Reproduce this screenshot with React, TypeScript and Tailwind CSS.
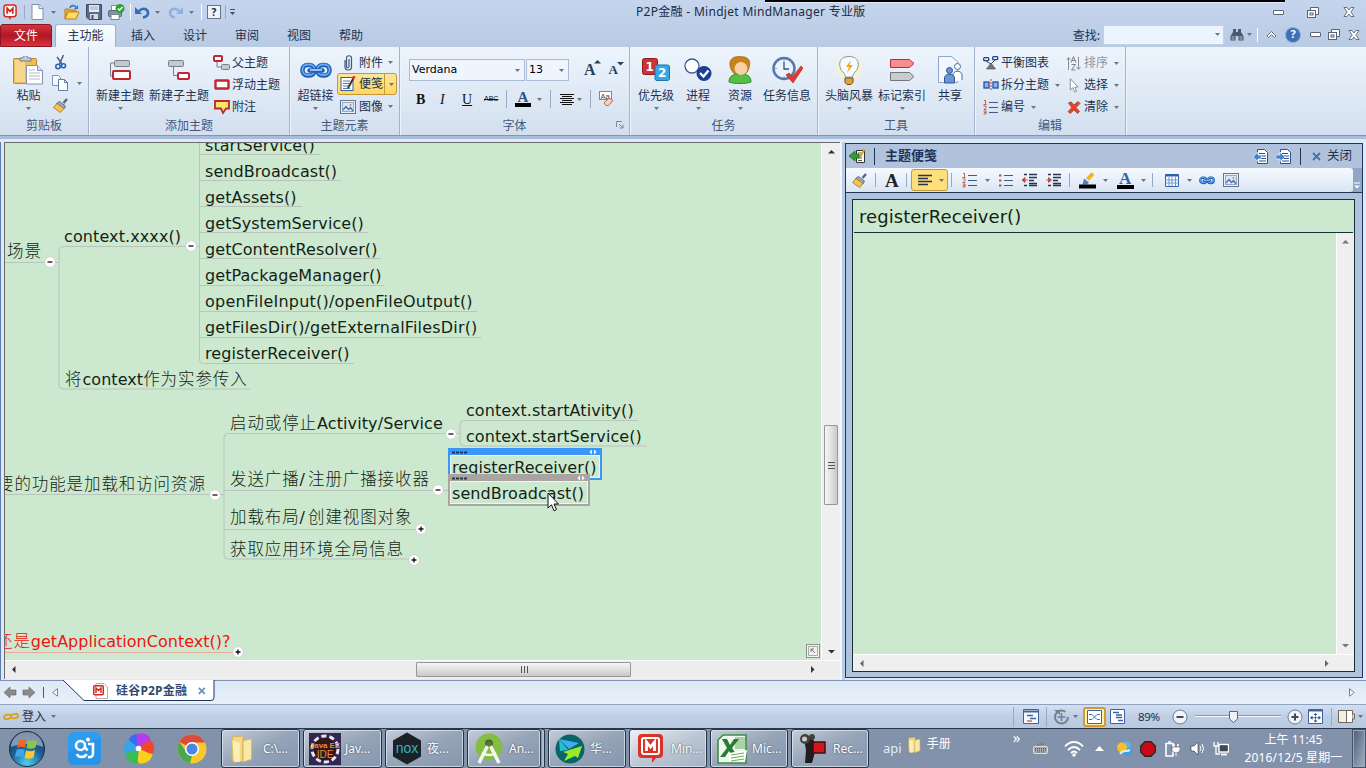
import React from "react";

type Kids = { children?: React.ReactNode };

function Ico({ w, h, children, className = "" }: Kids & { w: number; h: number; className?: string }) {
  return (
    <svg width={w} height={h} viewBox={`0 0 ${w} ${h}`} className={`block shrink-0 ${className}`} fill="none">
      {children}
    </svg>
  );
}

function Caret({ className = "" }: { className?: string }) {
  return (
    <Ico w={5} h={3} className={className}>
      <path d="M0 0h5L2.500 3z" fill="#6b7685" />
    </Ico>
  );
}

function Sep({ className = "" }: { className?: string }) {
  return <div className={`w-px shrink-0 bg-[#97a9c3] ${className}`} />;
}

/* ---------- icons ---------- */

const Mind = ({ s = 15 }: { s?: number }) => (
  <svg width={s} height={s + 2} viewBox="0 0 15 17" className="block shrink-0" fill="none">
    <rect x="1" y="1" width="13" height="12.500" rx="2.500" fill="#fff" stroke="#d5281f" strokeWidth="1.600" />
    <path d="M6 14h3l-1.500 3z" fill="#d5281f" />
    <path d="M4.500 10.500V4.500l3 3.400 3-3.400v6" stroke="#d5281f" strokeWidth="1.900" />
  </svg>
);
const Page = () => (
  <Ico w={13} h={16}>
    <path d="M1 .5h7l4 4v11H1z" fill="#fff" stroke="#7f90aa" />
    <path d="M8 .5v4h4" fill="#dfe7f3" stroke="#7f90aa" />
  </Ico>
);
const Open = () => (
  <Ico w={16} h={16}>
    <path d="M1 15V5h4l1 1h6v3" fill="#e3a92f" stroke="#b98316" />
    <path d="M1 15l3-7h11l-3 7z" fill="#ffd969" stroke="#b98316" />
    <path d="M6 4c1-3 4-3 6-1" stroke="#2f79c8" strokeWidth="1.600" />
    <path d="M10 5h4V1z" fill="#2f79c8" />
  </Ico>
);
const Save = () => (
  <Ico w={16} h={16}>
    <path d="M.5.500h15v15H3l-2.500-2.500z" fill="#5c6b85" stroke="#3d4b62" />
    <rect x="3" y="1" width="10" height="7" fill="#e4eaf2" />
    <path d="M4 3h8M4 5h8" stroke="#9aa8bb" />
    <rect x="4" y="10" width="8" height="5" fill="#d4dbe6" />
    <rect x="5.500" y="11" width="2" height="4" fill="#44536c" />
  </Ico>
);
const Print = () => (
  <Ico w={17} h={16}>
    <rect x="3.500" y="1.500" width="8" height="6" fill="#fff" stroke="#8090a6" />
    <rect x=".5" y="6.500" width="13" height="6" rx="1" fill="#8793a5" stroke="#5a6678" />
    <rect x="3" y="10.500" width="8" height="5" fill="#fff" stroke="#7b8797" />
    <circle cx="12" cy="4.500" r="4.500" fill="#28a336" />
    <path d="M9.800 4.500l1.700 1.700 3-3.300" stroke="#fff" strokeWidth="1.500" />
  </Ico>
);
const Undo = ({ c }: { c: string }) => (
  <Ico w={15} h={13}>
    <path d="M4 5c4-4 9-2 9 2 0 2.500-2 4-5 4.500" stroke={c} strokeWidth="2.600" />
    <path d="M0 1v7h7z" fill={c} />
  </Ico>
);
const Paste = () => (
  <Ico w={31} h={29}>
    <rect x=".5" y="2.500" width="23" height="25" rx="1" fill="#edbc5d" stroke="#b78a35" />
    <rect x="2" y="4" width="10" height="22" fill="#f7d58b" />
    <path d="M7 5V2h3c0-3 5-3 5 0h3v3z" fill="#c6cbd4" stroke="#79808c" />
    <path d="M13.500 9.500h11l5 5v13.500h-16z" fill="#fff" stroke="#8593aa" />
    <path d="M24.500 9.500v5h5" fill="#dce4f0" stroke="#8593aa" />
    <path d="M16 14h6M16 17h11M16 20h11M16 23h11" stroke="#aebbd0" />
  </Ico>
);
const Cut = () => (
  <Ico w={12} h={15}>
    <path d="M8.500 0L4 10M2 2l5 7" stroke="#4b5f86" strokeWidth="1.500" />
    <circle cx="3" cy="11.500" r="2.200" stroke="#2c62ad" strokeWidth="1.600" />
    <circle cx="8.500" cy="10.800" r="2" stroke="#2c62ad" strokeWidth="1.600" />
  </Ico>
);
const Copy = () => (
  <Ico w={17} h={16}>
    <path d="M.5.500h6l2 2v8h-8z" fill="#f7faff" stroke="#7d93b8" />
    <path d="M6.500 4.500h6l3 3v8h-9z" fill="#fff" stroke="#5d7db1" />
    <path d="M12.500 4.500v3h3" stroke="#5d7db1" />
  </Ico>
);
const Brush = () => (
  <Ico w={15} h={15}>
    <path d="M14 1l-3.500 4" stroke="#55657f" strokeWidth="2.400" />
    <path d="M6.500 3.500l6 4.500-1.500 3-7.500-5.500z" fill="#9aa7bd" stroke="#4c5c78" strokeWidth=".8" />
    <path d="M4 5.500l7 5-3.500 4L.5 9.500z" fill="#f3c550" stroke="#9a7423" strokeWidth=".8" />
  </Ico>
);
const NewTopic = () => (
  <Ico w={24} h={22}>
    <path d="M6 4H2.500v13H6" stroke="#777f89" />
    <rect x="6.500" y="1.500" width="15" height="6" rx="1" fill="#c4c8cf" stroke="#777f89" />
    <rect x="5" y="12" width="17" height="8" rx="1" fill="#fff" stroke="#bd2633" strokeWidth="2" />
  </Ico>
);
const NewSub = () => (
  <Ico w={24} h={22}>
    <path d="M6.500 8v8.500H11" stroke="#777f89" />
    <rect x="1.500" y="1.500" width="15" height="6" rx="1" fill="#c4c8cf" stroke="#777f89" />
    <rect x="11" y="14" width="11" height="6" rx="1" fill="#fff" stroke="#bd2633" strokeWidth="2" />
  </Ico>
);
const Parent = () => (
  <Ico w={17} h={16}>
    <path d="M4 6v6h5" stroke="#777f89" />
    <rect x="1" y="1" width="8" height="5" rx="1" fill="#fff" stroke="#bd2633" strokeWidth="2" />
    <rect x="8.500" y="9.500" width="8" height="5" rx="1" fill="#c4c8cf" stroke="#777f89" />
  </Ico>
);
const Floating = () => (
  <Ico w={16} h={12}>
    <rect x="1.500" y="1.500" width="13" height="8" rx=".5" fill="#fff" stroke="#bd2633" strokeWidth="2.400" />
  </Ico>
);
const Callout = () => (
  <Ico w={16} h={15}>
    <path d="M1 1h14v7.500h-3l-3 4.500-2-4.500H1z" fill="#ffe765" stroke="#bd2633" strokeWidth="1.800" />
  </Ico>
);
const Link = ({ w, h }: { w: number; h: number }) => (
  <svg width={w} height={h} viewBox="0 0 32 17" className="block shrink-0" fill="none">
    <rect x="2.500" y="3" width="12" height="10.500" rx="5" stroke="#1f5fb8" strokeWidth="4.600" />
    <rect x="17.500" y="3" width="12" height="10.500" rx="5" stroke="#1f5fb8" strokeWidth="4.600" />
    <rect x="2.500" y="2.500" width="12" height="10.500" rx="5" stroke="#6aa9ec" strokeWidth="1.800" />
    <rect x="17.500" y="2.500" width="12" height="10.500" rx="5" stroke="#6aa9ec" strokeWidth="1.800" />
    <path d="M9.500 8.500h13" stroke="#1f5fb8" strokeWidth="4.500" strokeLinecap="round" />
    <path d="M10 8h12" stroke="#a5cff7" strokeWidth="1.800" />
  </svg>
);
const Clip = () => (
  <Ico w={16} h={16}>
    <path d="M9 4v7.500c0 1.500-2.500 1.500-2.500 0V3c0-3 5-3 5 0v9c0 4-6.500 4-6.500 0V5" stroke="#42587c" strokeWidth="1.200" />
  </Ico>
);
const Note = () => (
  <Ico w={16} h={16}>
    <rect x="1" y="1.500" width="12" height="13" fill="#fff" stroke="#3b5f9b" />
    <path d="M3 5h7M3 7.500h6M3 10h5M3 12.500h7" stroke="#5579b5" />
    <path d="M13.500 2L8 12" stroke="#34363a" strokeWidth="2" />
    <path d="M14.500 0l-1.500 3" stroke="#d43a2f" strokeWidth="2.500" />
  </Ico>
);
const Picture = () => (
  <Ico w={16} h={14}>
    <rect x=".5" y=".5" width="15" height="13" fill="#eef2f8" stroke="#66758d" />
    <rect x="2.500" y="2.500" width="11" height="9" fill="#dbe7f5" stroke="#9aa9bf" />
    <path d="M3 10l3-3.500 2.500 3 2-2L13 11" stroke="#4472ae" strokeWidth="1.300" />
    <circle cx="10.500" cy="5" r="1" fill="#d78b4c" />
  </Ico>
);
const Lines = ({ center = false }: { center?: boolean }) => (
  <Ico w={16} h={12}>
    <path d={center ? "M1 1.500h14M3 3.500h10M1 5.500h14M3 7.500h10M1 9.500h14M3 11.500h10" : "M1 1.500h14M1 4.500h10M1 7.500h14M1 10.500h10"} stroke={center ? "#111" : "#26364f"} strokeWidth={center ? 1.2 : 1.4} />
  </Ico>
);
const Eraser = () => (
  <Ico w={16} h={16}>
    <rect x=".5" y=".5" width="12" height="8" fill="#fff" stroke="#7b8799" />
    <text x="1.500" y="7.500" fontSize="7.500" fill="#444" fontFamily="Liberation Sans">Aa</text>
    <path d="M5 12l5-5 4 2.500-4.500 5H7z" fill="#f6cfc5" stroke="#b96a5c" />
  </Ico>
);
const Priority = () => (
  <Ico w={28} h={24}>
    <rect x=".5" y=".5" width="15" height="16" rx="2" fill="#d2322f" stroke="#8f1b1b" />
    <rect x="13" y="7" width="14.500" height="15.500" rx="2" fill="#38a6e4" stroke="#1c72ab" />
    <text x="3.500" y="13" fontSize="12" fontWeight="700" fill="#fff" fontFamily="DejaVu Sans">1</text>
    <text x="16" y="19" fontSize="12" fontWeight="700" fill="#fff" fontFamily="DejaVu Sans">2</text>
  </Ico>
);
const Progress = () => (
  <Ico w={28} h={24}>
    <circle cx="8" cy="8" r="7" fill="#fbfdff" stroke="#3b5a9a" strokeWidth="1.300" />
    <circle cx="20" cy="15.500" r="7.500" fill="#1c3f93" />
    <path d="M16 15l3.500 3.500 5-6" stroke="#fff" strokeWidth="2.400" />
  </Ico>
);
const Person = () => (
  <Ico w={24} h={28}>
    <path d="M1 26c0-6 4-8 11-8s11 2 11 8c-5 2-17 2-22 0z" fill="#54bf45" stroke="#2c8c2a" />
    <path d="M2 9C1 3 6 0 12 .5c7 0 11 3 9.500 9-.5 4-2 7-4 8H6C4 15.500 2 12.500 2 9z" fill="#c8831c" stroke="#8d5a13" strokeWidth=".6" />
    <circle cx="13" cy="12.500" r="6.500" fill="#fbd0a4" />
  </Ico>
);
const Task = () => (
  <Ico w={31} h={28}>
    <circle cx="12" cy="12.500" r="10.500" fill="#eaf3fd" stroke="#5779a9" strokeWidth="2.500" />
    <path d="M12 5.500V13h5" stroke="#3a5078" strokeWidth="1.300" />
    <path d="M12 3.500v1M12 20.500v1M3.500 12.500h1" stroke="#3a5078" />
    <path d="M14 19l3-2 3.500 4L29 10l2 2-10 15z" fill="#e23b2e" stroke="#a81f18" strokeWidth=".6" />
  </Ico>
);
const Bulb = () => (
  <Ico w={26} h={32}>
    <circle cx="13" cy="13" r="12.500" fill="#fdf3bb" opacity=".75" />
    <path d="M13 2.500c-12 0-10.500 12-6 15.500 2 2 2 3 2.500 5h7c.5-2 .5-3 2.500-5 4.500-3.500 6-15.500-6-15.500z" fill="#f6fbff" stroke="#7a98b9" />
    <path d="M15 6l-5 7h3l-2 6 6-8h-3.500z" fill="#f3a51c" />
    <path d="M9 24h8v4.500l-2 2h-4l-2-2z" fill="#dba537" stroke="#725013" />
  </Ico>
);
const Markers = () => (
  <Ico w={27} h={26}>
    <path d="M1.500 2.500h19l4.500 4-4.500 4h-19z" fill="#f58d91" stroke="#c02a37" />
    <path d="M1.500 15.500h19l4.500 4-4.500 4h-19z" fill="#c9cbce" stroke="#73777d" />
  </Ico>
);
const Share = () => (
  <Ico w={27} h={28}>
    <path d="M1.500.500h13l6 5v21h-19z" fill="#f3f7fd" stroke="#8fa5c9" />
    <circle cx="20.500" cy="10.500" r="3" fill="#fff" stroke="#3c67ad" />
    <path d="M16 26v-7c0-5 9-5 9 0v5" fill="#fff" stroke="#3c67ad" />
    <circle cx="12.500" cy="14.500" r="3" fill="#6e93d1" stroke="#2b549b" />
    <path d="M7.500 27v-5c0-5 10-5 10 0v5z" fill="#6e93d1" stroke="#2b549b" />
  </Ico>
);
const Balance = () => (
  <Ico w={16} h={14}>
    <rect x=".7" y="1.700" width="5" height="3" rx=".8" fill="#dfeafa" stroke="#21468b" strokeWidth="1.300" />
    <rect x="9.700" y=".700" width="5" height="3" rx=".8" fill="#dfeafa" stroke="#21468b" strokeWidth="1.300" />
    <path d="M3 5l5 3 4-4" stroke="#444" />
    <path d="M8 7l4.500 6h-9z" fill="#777" stroke="#444" strokeWidth=".6" />
  </Ico>
);
const Split = () => (
  <Ico w={16} h={12}>
    <rect x="1" y="3" width="5" height="6" fill="#8fb2ea" stroke="#23509f" strokeWidth="1.300" />
    <rect x="10" y="3" width="5" height="6" fill="#8fb2ea" stroke="#23509f" strokeWidth="1.300" />
    <path d="M8 0v12" stroke="#d03b38" strokeDasharray="2 1" />
  </Ico>
);
const Numbers = ({ dots = false }: { dots?: boolean }) => (
  <Ico w={16} h={15}>
    <path d="M6 2.500h9M6 7.500h9M6 12.500h9" stroke="#3f5a86" strokeWidth="1.200" />
    {dots ? (
      <path d="M1 1.500h2.500v2H1zM1 6.500h2.500v2H1zM1 11.500h2.500v2H1z" fill="#c4533a" />
    ) : (
      <path d="M1 .5h1.500v4M.5 4.500h3M.5 6h2.500v1.500L1 9.500h2.500M.5 11h2.500v3H.5M1 12.500h2" stroke="#c4533a" strokeWidth=".9" />
    )}
  </Ico>
);
const SortIco = () => (
  <Ico w={15} h={15}>
    <path d="M2.500 14V2M.5 4l2-2.500L4.500 4M12.500 1v12M10.500 11l2 2.500 2-2.500" stroke="#8a8f98" />
    <path d="M5 6.500L7.500.500 10 6.500M6 4.500h3M5.500 8.500h4l-4 5.500h4" stroke="#7c828c" />
  </Ico>
);
const Pointer = ({ w = 12, h = 20, c = "#111" }: { w?: number; h?: number; c?: string }) => (
  <svg width={w} height={h} viewBox="0 0 12 20" className="block shrink-0">
    <path d="M1 1v15l3.500-3.200 2.500 6 2.500-1.200-2.500-5.600h4.500z" fill="#fff" stroke={c} />
  </svg>
);
const Cross = () => (
  <Ico w={14} h={13}>
    <path d="M1.500 2L4 .8 7 4l4-3.500L13 2.500 9 6.500l3.500 4-2 2L7 9l-4 3.500-1.800-2L4.800 6.500z" fill="#e0472a" stroke="#a32c17" strokeWidth=".7" />
  </Ico>
);
const WinMin = () => (
  <Ico w={11} h={5}>
    <rect x=".5" y=".5" width="10" height="4" rx=".5" fill="#fff" stroke="#59647a" />
  </Ico>
);
const WinRestore = () => (
  <Ico w={12} h={11}>
    <path d="M3.500.500h8v7h-8z" fill="#fff" stroke="#59647a" />
    <rect x=".5" y="3.500" width="8" height="7" fill="#fff" stroke="#59647a" />
    <rect x="3" y="6" width="3" height="2" stroke="#59647a" />
  </Ico>
);
const WinClose = () => (
  <Ico w={12} h={10}>
    <path d="M1 .5h3l2 2.500L8 .5h3L7.800 5 11 9.500H8L6 7 4 9.500H1L4.200 5z" fill="#fff" stroke="#59647a" strokeWidth=".9" />
  </Ico>
);
const Arrow = ({ d, c = "#333" }: { d: "u" | "d" | "l" | "r"; c?: string }) => {
  const p = { u: "M0 5.500h7L3.500 2z", d: "M0 2h7L3.500 5.500z", l: "M5.500 0v7L2 3.500z", r: "M2 0v7l3.500-3.500z" };
  return (
    <Ico w={7} h={7}>
      <path d={p[d]} fill={c} />
    </Ico>
  );
};
const Indent = ({ out = false }: { out?: boolean }) => (
  <Ico w={16} h={14}>
    <path d="M2 1.500h3M7 1.500h8M7 4.500h8M7 7.500h5M7 10.500h8M2 12.500h3M7 12.500h8" stroke="#26364f" strokeWidth="1.300" />
    <path d={out ? "M0 7l3-2.500v5zM3 7h3" : "M5.500 7l-3-2.500v5zM0 7h3"} fill="#b5493c" stroke="#b5493c" strokeWidth=".8" />
  </Ico>
);
const DocArrow = ({ right = false }: { right?: boolean }) => (
  <Ico w={15} h={15}>
    <path d="M4.500.500h7l3 3v11h-10z" fill="#fff" stroke="#2b4f8e" />
    <path d="M6 4.500h6M6 7h7M6 9.500h7M6 12h7" stroke="#2b4f8e" />
    <path d={right ? "M0 6h4V3l5 5-5 4.500V10H0z" : "M8 6H5V3L0 8l5 4.500V10h3z"} fill="#3d83cf" stroke="#fff" strokeWidth=".6" />
  </Ico>
);

/* ---------- ribbon ---------- */

function Big({ icon, label, caret = true, w }: { icon: React.ReactNode; label: string; caret?: boolean; w: string }) {
  return (
    <div className={`flex shrink-0 flex-col items-center ${w}`}>
      <div className="flex h-[32px] shrink-0 items-center justify-center">{icon}</div>
      <div className="mt-[2px] h-[16px] shrink-0 whitespace-nowrap leading-[16px]">{label}</div>
      {caret && <Caret className="mt-[3px]" />}
    </div>
  );
}

function Small({ icon, label, caret = false, dim = false }: { icon: React.ReactNode; label: string; caret?: boolean; dim?: boolean }) {
  return (
    <div className={`flex h-[22px] shrink-0 items-center whitespace-nowrap ${dim ? "text-[#8b97a8]" : ""}`}>
      <div className="mr-[2px] flex w-[17px] justify-center">{icon}</div>
      {label}
      {caret && <Caret className="ml-[6px]" />}
    </div>
  );
}

function Group({ w, label, children }: Kids & { w: string; label: string }) {
  return (
    <section className={`flex h-full shrink-0 flex-col border-r border-[#a3b4cd] shadow-[1px_0_0_#eef4fb] ${w}`}>
      <div className="flex h-[70px] shrink-0 pt-[7px]">{children}</div>
      <div className="h-[18px] text-center leading-[18px] text-[#44577a]">{label}</div>
    </section>
  );
}

function Ribbon() {
  return (
    <div className="flex h-[89px] border-b border-[#8496b2] bg-linear-to-b from-[#edf4fc] via-[#e0eaf6] to-[#d3dfef] text-[12px] text-[#22324f]">
      <Group w="w-[89px]" label="剪贴板">
        <Big w="ml-[1px] w-[55px]" icon={<Paste />} label="粘贴" />
        <div className="-ml-[4px] flex flex-col">
          <div className="-mt-[2px] flex h-[20px] items-center pl-[3px]"><Cut /></div>
          <div className="mt-[2px] flex h-[18px] items-center gap-[8px]"><Copy /><Caret /></div>
          <div className="mt-[3px] flex h-[20px] items-center pl-[1px]"><Brush /></div>
        </div>
      </Group>
      <Group w="w-[201px]" label="添加主题">
        <Big w="ml-[3px] w-[56px]" icon={<NewTopic />} label="新建主题" />
        <Big w="w-[62px]" icon={<NewSub />} label="新建子主题" caret={false} />
        <div className="-mt-[2px] ml-[3px] flex flex-col">
          <Small icon={<Parent />} label="父主题" />
          <Small icon={<Floating />} label="浮动主题" />
          <Small icon={<Callout />} label="附注" />
        </div>
      </Group>
      <Group w="w-[110px]" label="主题元素">
        <Big w="ml-[4px] w-[43px]" icon={<Link w={32} h={17} />} label="超链接" />
        <div className="-mt-[2px] flex w-[60px] flex-col">
          <div className="flex h-[21px] shrink-0 items-center pl-[3px]"><Clip /><span className="ml-[3px]">附件</span><Caret className="ml-[5px]" /></div>
          <div className="flex h-[22px] shrink-0 items-center rounded-[3px] border border-[#c29a3c] bg-linear-to-b from-[#fde59a] to-[#ffd75e] pl-[2px]">
            <Note /><span className="ml-[3px]">便笺</span>
            <div className="ml-[1px] flex h-full items-center border-l border-[#c29a3c] pl-[4px]"><Caret /></div>
          </div>
          <div className="flex h-[23px] shrink-0 items-center pl-[3px]"><Picture /><span className="ml-[3px]">图像</span><Caret className="ml-[5px]" /></div>
        </div>
      </Group>
      <Group w="w-[230px]" label="字体">
        <div className="flex w-full flex-col pl-[9px] pt-[5px]">
          <div className="flex h-[22px] items-center font-['DejaVu_Sans',sans-serif] text-[11px] text-black">
            <div className="flex h-[22px] w-[116px] items-center justify-between border border-[#a9bbd5] bg-[#eef5fd] pl-[2px] pr-[4px]">Verdana<Caret /></div>
            <div className="ml-[1px] flex h-[22px] w-[43px] items-center justify-between border border-[#a9bbd5] bg-[#eef5fd] pl-[2px] pr-[4px]">13<Caret /></div>
            <div className="ml-[15px] flex font-['Liberation_Serif',serif] text-[16px] font-bold text-[#24415c]">A<span className="-ml-[2px]"><Arrow d="u" c="#24415c" /></span></div>
            <div className="ml-[8px] flex font-['Liberation_Serif',serif] text-[13px] font-bold text-[#24415c]">A<span className="-ml-[1px]"><Arrow d="d" c="#24415c" /></span></div>
          </div>
          <div className="mt-[7px] flex h-[22px] items-center font-['Liberation_Serif',serif] text-[14px] text-[#111]">
            <b className="w-[22px] pl-[7px]">B</b>
            <i className="w-[23px] pl-[9px]">I</i>
            <u className="w-[25px] pl-[8px]">U</u>
            <s className="w-[26px] pl-[5px] font-['Liberation_Sans',sans-serif] text-[7px]">ABC</s>
            <Sep className="ml-[1px] h-[18px]" />
            <div className="ml-[8px] flex w-[16px] flex-col items-center">
              <span className="text-[15px] font-bold leading-[12px] text-[#2d5288]">A</span>
              <div className="h-[4px] w-[16px] bg-black" />
            </div>
            <Caret className="ml-[6px]" />
            <Sep className="ml-[8px] h-[18px]" />
            <div className="ml-[8px]"><Lines center /></div>
            <Caret className="ml-[2px]" />
            <Sep className="ml-[8px] h-[18px]" />
            <div className="ml-[8px]"><Eraser /></div>
          </div>
        </div>
        <div className="-ml-[13px] mt-[67px]">
          <Ico w={8} h={8}><path d="M.5 6V.5H6M3 3l4 4M7 3.500V7H3.500" stroke="#7b8ba5" /></Ico>
        </div>
      </Group>
      <Group w="w-[188px]" label="任务">
        <Big w="ml-[5px] w-[42px]" icon={<Priority />} label="优先级" />
        <Big w="w-[42px]" icon={<Progress />} label="进程" />
        <Big w="w-[42px]" icon={<Person />} label="资源" />
        <Big w="w-[52px]" icon={<Task />} label="任务信息" caret={false} />
      </Group>
      <Group w="w-[157px]" label="工具">
        <Big w="ml-[4px] w-[54px]" icon={<Bulb />} label="头脑风暴" />
        <Big w="w-[52px]" icon={<Markers />} label="标记索引" />
        <Big w="w-[44px]" icon={<Share />} label="共享" caret={false} />
      </Group>
      <Group w="w-[151px]" label="编辑">
        <div className="-mt-[2px] ml-[7px] w-[83px]">
          <Small icon={<Balance />} label="平衡图表" />
          <Small icon={<Split />} label="拆分主题" caret />
          <Small icon={<Numbers />} label="编号" caret />
        </div>
        <div className="-mt-[2px]">
          <Small icon={<SortIco />} label="排序" caret dim />
          <Small icon={<Pointer w={10} h={15} c="#66707f" />} label="选择" caret />
          <Small icon={<Cross />} label="清除" caret />
        </div>
      </Group>
    </div>
  );
}

function TitleBar() {
  return (
    <header className="relative flex h-[24px] items-center text-[12px] text-[#1b2a44]">
      <div className="ml-[3px] flex h-[22px] items-center">
        <Mind s={14} />
        <Sep className="ml-[7px] h-[14px]" />
        <div className="ml-[6px]"><Page /></div>
        <Caret className="ml-[7px]" />
        <div className="ml-[8px]"><Open /></div>
        <div className="ml-[6px]"><Save /></div>
        <div className="ml-[6px]"><Print /></div>
        <div className="ml-[5px] h-[16px] w-px bg-white" />
        <div className="ml-[4px]"><Undo c="#356cb8" /></div>
        <Caret className="ml-[5px]" />
        <div className="ml-[8px] -scale-x-100"><Undo c="#8fb0dc" /></div>
        <Caret className="ml-[6px]" />
        <div className="ml-[7px] h-[16px] w-px bg-white" />
        <div className="ml-[5px] flex h-[14px] w-[14px] items-center justify-center border border-[#66758d] bg-[#eef3fa] text-[10px] font-bold">?</div>
        <Sep className="ml-[4px] h-[14px]" />
        <Ico w={5} h={6} className="ml-[4px]"><path d="M0 .5h5" stroke="#3f4f6a" /><path d="M0 3h5L2.500 6z" fill="#3f4f6a" /></Ico>
      </div>
      <h1 className="ml-[401px] whitespace-nowrap text-[12px] leading-[24px] tracking-[0.300px]">P2P金融 - Mindjet MindManager 专业版</h1>
      <div className="ml-auto flex items-center pr-[11px]">
        <WinMin />
        <div className="ml-[23px]"><WinRestore /></div>
        <div className="ml-[24px]"><WinClose /></div>
      </div>
      <div className="absolute left-[765px] top-0 h-[3px] w-[520px] border-b border-[#dfe8f4] bg-black" />
    </header>
  );
}

function Tabs() {
  return (
    <nav className="flex h-[23px] items-end text-[12px] text-[#22324f]">
      <div className="h-[23px] w-[52px] rounded-t-[3px] border border-[#8d1420] bg-linear-to-b from-[#d5353f] via-[#b01724] to-[#d9303d] text-center leading-[21px] text-white">文件</div>
      <div className="ml-[3px] h-[23px] w-[61px] rounded-t-[3px] border border-b-0 border-[#9db1ce] bg-linear-to-b from-[#f9fcff] to-[#edf4fc] text-center leading-[22px]">主功能</div>
      {["插入", "设计", "审阅", "视图", "帮助"].map((t) => (
        <div key={t} className="w-[52px] pl-[2px] text-center leading-[22px]">{t}</div>
      ))}
      <div className="ml-auto flex h-[23px] items-center pb-[2px] pr-[6px]">
        <span className="font-['Noto_Sans_CJK_SC',sans-serif]">查找:</span>
        <div className="ml-[3px] flex h-[20px] w-[121px] items-center justify-end border border-[#c3d1e5] bg-[#ecf4fd] pr-[3px]"><Caret /></div>
        <Ico w={14} h={13} className="ml-[6px]">
          <path d="M3 1h3v3h2V1h3v3l2.500 4v4.500h-5V8h-3v4.500h-5V8L3 4z" fill="#4b5970" />
          <path d="M1.500 9h3M9.500 9h3M1.500 11h3M9.500 11h3" stroke="#cfd8e6" strokeWidth=".8" />
        </Ico>
        <Caret className="ml-[3px]" />
        <div className="ml-[5px] h-[14px] w-px bg-white" />
        <Ico w={9} h={7} className="ml-[9px]"><path d="M0 5l4.500-4.500L9 5 7.500 6.500l-3-3-3 3z" fill="#fff" stroke="#59647a" strokeWidth=".9" /></Ico>
        <div className="ml-[10px] flex h-[14px] w-[14px] items-center justify-center rounded-full bg-[#3e70b7] text-[11px] font-bold text-white ring-1 ring-[#8ba9d6]">?</div>
        <div className="ml-[10px]"><WinMin /></div>
        <div className="ml-[7px]"><WinRestore /></div>
        <div className="ml-[8px]"><WinClose /></div>
      </div>
    </nav>
  );
}

/* ---------- mind map ---------- */

type Topic = { t: string; x: number; y: number; red?: boolean; ls?: number };

const topics: Topic[] = [
  { t: "startService()", x: 205, y: 146 },
  { t: "sendBroadcast()", x: 205, y: 172 },
  { t: "getAssets()", x: 205, y: 198 },
  { t: "getSystemService()", x: 205, y: 224 },
  { t: "getContentResolver()", x: 205, y: 250 },
  { t: "getPackageManager()", x: 205, y: 276 },
  { t: "openFileInput()/openFileOutput()", x: 205, y: 302, ls: 0.22 },
  { t: "getFilesDir()/getExternalFilesDir()", x: 205, y: 328, ls: 0.18 },
  { t: "registerReceiver()", x: 205, y: 354 },
  { t: "context.xxxx()", x: 64, y: 237, ls: 0.1 },
  { t: "场景", x: 7, y: 250 },
  { t: "将context作为实参传入", x: 65, y: 378 },
  { t: "启动或停止Activity/Service", x: 230, y: 422, ls: 0.1 },
  { t: "context.startAtivity()", x: 466, y: 411 },
  { t: "context.startService()", x: 466, y: 437 },
  { t: "发送广播/注册广播接收器", x: 230, y: 478, ls: 3 },
  { t: "加载布局/创建视图对象", x: 230, y: 516, ls: 3 },
  { t: "获取应用环境全局信息", x: 230, y: 548 },
  { t: "要的功能是加载和访问资源", x: -3, y: 483 },
  { t: "还是getApplicationContext()?", x: -4, y: 640, red: true, ls: 0.02 },
];

const bubbles: [number, number, boolean][] = [
  [191, 246, false], [50, 262, false], [451, 434, false], [438, 490, false],
  [215, 495, false], [421, 529, true], [414, 560, true], [238, 652, true],
];

function Mixed({ t, ls }: { t: string; ls: number }) {
  return (
    <>
      {t.split(/([\u4e00-\u9fff]+)/).filter(Boolean).map((s, i) =>
        /[\u4e00-\u9fff]/.test(s) ? (
          <span key={i} className="font-['Noto_Sans_CJK_SC',sans-serif] text-[16.500px] font-light tracking-[0.900px]">{s}</span>
        ) : (
          <span key={i} style={{ letterSpacing: ls }}>{s}</span>
        ),
      )}
    </>
  );
}

function Selected({ t, blue }: { t: string; blue: boolean }) {
  return (
    <div className={`relative h-full w-full overflow-hidden border-2 ${blue ? "border-[#3a96fb]" : "border-[#a9a3a1]"}`}>
      <div className={`flex h-[5px] items-center justify-between pl-[1px] pr-[3px] ${blue ? "bg-[#3a96fb]" : "bg-[#a9a3a1]"}`}>
        <Ico w={16} h={3}><path d="M1 1.500h15" stroke="#26374b" strokeWidth="2" strokeDasharray="3 1" /></Ico>
        <Ico w={8} h={6} className="-mt-[2px]"><path d="M3 .5v5L.5 3zM5 .5v5L7.500 3z" fill="#fff" /></Ico>
      </div>
      <div className="h-[23px] whitespace-nowrap border border-[#eef7ee] bg-[#cce8cf] pl-[1px] leading-[23px] tracking-[0.060px]">{t}</div>
    </div>
  );
}

function MindMap() {
  return (
    <div className="relative h-[517px] w-[816px] overflow-hidden bg-[#cce8cf] font-['DejaVu_Sans',sans-serif] text-[16px] text-[#141f16]">
      <svg className="absolute left-0 top-0" width="816" height="517" viewBox="5 143 816 517" fill="none" stroke="#b9c4bc">
        <path d="M199.500 143V360q0 3.500 4 3.500H354M199 154.500H320M199 180.500H341M199 206.500H302M199 232.500H368M199 258.500H381M199 285.500H384M199 311.500H477M199 337.500H481" />
        <path d="M0 262.500H59M189 246.500H63q-4 0-4 4V385q0 4 4 4H250M187 246.500H199" />
        <path d="M450 433.500H228q-4 0-4 4V555q0 4 4 4H414M224 490.500H438M224 529.500H421M0 494.500H224M451 433.500H460M438 490.500H449" />
        <path d="M638 420.500H464q-4 0-4 4V442q0 4 4 4H646" />
        <path d="M0 652.500H238" stroke="#e8a9a0" />
      </svg>
      {topics.map((n) => (
        <div
          key={n.t + n.y}
          className={`absolute flex h-[20px] items-baseline whitespace-nowrap leading-[20px] ${n.red ? "text-[#f0140c]" : ""}`}
          style={{ left: n.x - 5, top: n.y - 153 }}
        >
          <Mixed t={n.t} ls={n.ls ?? 0.07} />
        </div>
      ))}
      {bubbles.map(([x, y, plus]) => (
        <svg key={`${x}-${y}`} className="absolute" style={{ left: x - 11, top: y - 149 }} width="12" height="12" viewBox="0 0 12 12">
          <circle cx="6" cy="6" r="5.200" fill="#fff" stroke="#d5cfd6" strokeWidth=".8" />
          <path d={plus ? "M3.500 6h5M6 3.500v5" : "M3.500 6h5"} stroke="#111" strokeWidth="1.300" />
        </svg>
      ))}
      <div className="absolute left-[443px] top-[305px] h-[32px] w-[154px]"><Selected t="registerReceiver()" blue /></div>
      <div className="absolute left-[443px] top-[331px] h-[32px] w-[142px]"><Selected t="sendBroadcast()" blue={false} /></div>
      <div className="absolute left-[542px] top-[349px]"><Pointer /></div>
      <div className="absolute bottom-[2px] right-[1px] flex h-[14px] w-[14px] items-center justify-center border border-[#8d938f] bg-[#f2f2f2]">
        <Ico w={10} h={10}><path d="M.5.500h9v9h-9z" stroke="#aaa" /><path d="M3 6V3h3M3 3l4 4" stroke="#777" /></Ico>
      </div>
    </div>
  );
}

function MapPane() {
  return (
    <div className="flex h-[537px] w-[836px] flex-col border-l border-t border-[#6b6b6b] bg-[#f0f0f0]">
      <div className="flex h-[517px]">
        <MindMap />
        <div className="flex w-[19px] flex-col items-center border-l border-white bg-[#f0eff0] py-[5px]">
          <Arrow d="u" />
          <div className="mt-[270px] flex h-[80px] w-[14px] items-center justify-center rounded-[1px] border border-[#979797] bg-linear-to-r from-[#f4f4f4] via-[#e2e2e2] to-[#c9c9cc]">
            <Ico w={7} h={8}><path d="M0 1.500h7M0 4.500h7M0 7.500h7" stroke="#555" /></Ico>
          </div>
          <div className="mt-auto"><Arrow d="d" /></div>
        </div>
      </div>
      <div className="flex h-[18px] items-center border-t border-white bg-[#ededed] pl-[5px] pr-[24px]">
        <Arrow d="l" />
        <div className="ml-[399px] flex h-[15px] w-[215px] items-center justify-center rounded-[1px] border border-[#979797] bg-linear-to-b from-[#f4f4f4] via-[#e0e0e0] to-[#c9c9cc]">
          <Ico w={8} h={7}><path d="M1.500 0v7M4.500 0v7M7.500 0v7" stroke="#555" /></Ico>
        </div>
        <div className="ml-auto"><Arrow d="r" /></div>
      </div>
    </div>
  );
}

function NotesPane() {
  return (
    <aside className="flex h-[535px] w-[518px] flex-col border border-[#1f365c] bg-[#b1c2dc]">
      <div className="flex h-[24px] items-center text-[12px] text-[#1d3358]">
        <Ico w={17} h={16} className="ml-[3px]">
          <path d="M7.500 2.500h8v12h-8z" fill="#fff" stroke="#333" />
          <path d="M9 5h4M9 7.500h4M9 10h4M9 12.500h4" stroke="#555" />
          <path d="M15.500 1l-5 9" stroke="#d9a13a" strokeWidth="2.200" />
          <path d="M0 8l6-5v3h4v4H6v3z" fill="#2f9e36" stroke="#17631c" strokeWidth=".7" />
        </Ico>
        <div className="ml-[8px] h-[17px] w-px bg-[#1d3358]" />
        <b className="ml-[10px] text-[13px]">主题便笺</b>
        <div className="ml-auto"><DocArrow /></div>
        <div className="ml-[8px]"><DocArrow right /></div>
        <div className="ml-[9px] h-[17px] w-px bg-[#1d3358]" />
        <Ico w={9} h={9} className="ml-[11px]"><path d="M1 1l7 7M8 1L1 8" stroke="#3f73ad" strokeWidth="1.800" /></Ico>
        <span className="ml-[6px] mr-[10px] text-[12.500px]">关闭</span>
      </div>
      <div className="flex h-[25px] border-b border-[#1f365c] bg-[#8fa6c8]">
        <div className="flex w-[507px] items-center rounded-r-[3px] bg-linear-to-b from-[#f6faff] to-[#d9e5f4]">
          <div className="ml-[6px]"><Brush /></div>
          <Sep className="ml-[8px] h-[14px]" />
          <b className="ml-[9px] font-['Liberation_Serif',serif] text-[19px] leading-none text-[#222]">A</b>
          <Sep className="ml-[7px] h-[14px]" />
          <div className="ml-[4px] flex h-[22px] w-[37px] items-center rounded-[3px] border border-[#c29a3c] bg-[#ffdf79] pl-[5px]">
            <Lines /><Caret className="ml-[6px]" />
          </div>
          <Sep className="ml-[3px] h-[14px]" />
          <div className="ml-[10px]"><Numbers /></div>
          <Caret className="ml-[7px]" />
          <div className="ml-[8px]"><Numbers dots /></div>
          <div className="ml-[8px]"><Indent out /></div>
          <div className="ml-[8px]"><Indent /></div>
          <Sep className="ml-[7px] h-[14px]" />
          <Ico w={17} h={17} className="ml-[9px]">
            <path d="M14 1.500l-5.500 6" stroke="#f0b326" strokeWidth="4" /><path d="M5 6.500l5 4-2 2H3.500z" fill="#4c82cc" /><path d="M0 12.500h17v4H0z" fill="#000" />
          </Ico>
          <Caret className="ml-[7px]" />
          <div className="ml-[9px] flex w-[17px] flex-col items-center font-['Liberation_Serif',serif]">
            <b className="text-[17px] leading-[13px] text-[#2b62ab]">A</b><div className="h-[4px] w-[17px] bg-black" />
          </div>
          <Caret className="ml-[7px]" />
          <Sep className="ml-[6px] h-[14px]" />
          <Ico w={14} h={13} className="ml-[12px]"><path d="M.5.500h13v12H.5z" fill="#fff" stroke="#2c62ad" /><path d="M.5 1.500h13" stroke="#2c62ad" strokeWidth="2" /><path d="M.5 6h13M.5 9h13M4 3v9M7 3v9M10.500 3v9" stroke="#6d97d2" /></Ico>
          <Caret className="ml-[8px]" />
          <div className="ml-[7px]"><Link w={16} h={9} /></div>
          <div className="ml-[8px]"><Picture /></div>
        </div>
        <Ico w={6} h={7} className="ml-[1px] mt-[14px]"><path d="M0 1h6" stroke="#fff" /><path d="M0 3.500h6L3 6.500z" fill="#fff" /></Ico>
      </div>
      <div className="ml-[6px] mt-[6px] flex h-[473px] w-[503px] flex-col border border-[#14313a] bg-[#cce8cf]">
        <div className="mx-[1px] h-[33px] border-b border-[#14313a] pl-[5px] font-['DejaVu_Sans',sans-serif] text-[18px] leading-[34px] tracking-[0.050px] text-[#141f16]">registerReceiver()</div>
        <div className="flex grow">
          <div className="grow" />
          <div className="flex w-[18px] flex-col items-center justify-between border-l border-white bg-[#f0eff0] pb-[5px] pt-[5px]"><Arrow d="u" c="#777" /><Arrow d="d" c="#777" /></div>
        </div>
        <div className="flex h-[17px] items-center justify-between border-t border-white bg-[#efefef] pl-[5px] pr-[24px]"><Arrow d="l" c="#666" /><Arrow d="r" c="#666" /></div>
      </div>
    </aside>
  );
}

/* ---------- bottom bars ---------- */

function DocTabs() {
  return (
    <div className="flex h-[24px] items-start border-t border-[#7f94b5] bg-linear-to-b from-[#dde9f7] to-[#e8f0fa] text-[12px]">
      <div className="flex h-[23px] items-center pl-[4px]">
        <Ico w={13} h={11}><path d="M0 5.500L6 0v3h6v5H6v3z" fill="#8b8b8b" stroke="#666" strokeWidth=".6" /></Ico>
        <Ico w={13} h={11} className="ml-[5px]"><path d="M13 5.500L7 0v3H1v5h6v3z" fill="#8b8b8b" stroke="#666" strokeWidth=".6" /></Ico>
        <div className="ml-[8px] h-[11px] w-px bg-[#555]" />
        <Ico w={6} h={9} className="ml-[8px]"><path d="M5.500.700v7.500L.7 4.500z" fill="#fff" stroke="#666" strokeWidth=".8" /></Ico>
      </div>
      <div className="relative -mt-px ml-[5px] h-[22px] w-[152px]">
        <Ico w={152} h={22} className="absolute left-0 top-0"><path d="M0 0l21 20.500h127q3 0 3-3V0" fill="#fff" stroke="#1f365c" /></Ico>
        <div className="relative flex h-[21px] items-center pl-[30px] text-[#33496e]">
          <Ico w={15} h={16}>
            <path d="M3 .5h8l3.500 3.500v11.500H3z" fill="#fff" stroke="#c8a5a5" /><rect x=".8" y="2.800" width="9.500" height="9" rx="1" fill="#fff" stroke="#d5281f" strokeWidth="1.500" /><path d="M3 10V5l2.500 2.500L8 5v5" stroke="#d5281f" strokeWidth="1.400" />
          </Ico>
          <b className="ml-[8px] whitespace-nowrap tracking-[0.200px]">硅谷P2P金融</b>
          <Ico w={8} h={8} className="ml-[11px]"><path d="M.8.800l6 6M6.800.800l-6 6" stroke="#6d8cbc" strokeWidth="1.700" /></Ico>
        </div>
      </div>
      <Ico w={6} h={9} className="ml-auto mr-[11px] mt-[7px]"><path d="M.5.700v7.500l4.800-3.700z" fill="#fff" stroke="#666" strokeWidth=".8" /></Ico>
    </div>
  );
}

function StatusBar() {
  return (
    <div className="flex h-[24px] items-center border-t border-[#8fa3c1] bg-linear-to-b from-[#d3e0f1] via-[#bfcee4] to-[#b8c9e0] text-[12px] text-[#22324f]">
      <Ico w={17} h={9} className="ml-[3px]">
        <rect x="1" y="3" width="7" height="4" rx="2" stroke="#d9a21c" strokeWidth="1.800" transform="rotate(-12 4 5)" /><rect x="8" y="2" width="7" height="4" rx="2" stroke="#d9a21c" strokeWidth="1.800" transform="rotate(-12 12 4)" />
      </Ico>
      <span className="ml-[2px]">登入</span>
      <Caret className="ml-[5px]" />
      <Sep className="ml-auto h-[20px]" />
      <Ico w={16} h={15} className="ml-[9px]"><path d="M.5.500h15v14H.5z" fill="#f6f9fd" stroke="#3c64a3" /><path d="M1 2.500h14" stroke="#3c64a3" strokeWidth="2" /><path d="M4 6.500h6M7 9.500h6" stroke="#3c64a3" strokeWidth="1.300" /><path d="M4 12h5" stroke="#cc5b3b" strokeWidth="1.300" /></Ico>
      <Sep className="ml-[7px] h-[20px]" />
      <Ico w={17} h={16} className="ml-[6px]"><circle cx="8.500" cy="8" r="6.500" stroke="#767f8c" strokeWidth="2" strokeDasharray="34 7" /><path d="M8.500 4v8M4.500 8h8" stroke="#767f8c" strokeWidth="1.600" /><path d="M1 1h6v5z" fill="#767f8c" /></Ico>
      <Caret className="ml-[3px]" />
      <div className="ml-[5px] flex h-[20px] w-[23px] items-center justify-center rounded-[3px] border-2 border-[#d29b2b] bg-[#fff0b5]">
        <Ico w={15} h={14}><path d="M.5.500h14v13H.5z" fill="#fff" stroke="#3c64a3" /><path d="M2 4.500h3l5 5h3M2 9.500h3l5-5h3" stroke="#3c76c4" /></Ico>
      </div>
      <Ico w={15} h={15} className="ml-[4px]"><path d="M.5.500h14v14H.5z" fill="#fff" stroke="#3c64a3" /><path d="M3 3.500h6M6 6h6M6 8.500h6M8 11.500h5" stroke="#3c64a3" strokeWidth="1.300" /></Ico>
      <span className="ml-[13px] w-[22px] whitespace-nowrap text-[11.500px] tracking-[-0.300px]">89%</span>
      <Ico w={16} h={16} className="ml-[12px]"><circle cx="8" cy="8" r="7" fill="#f0f4fa" stroke="#6d7b92" /><path d="M4.500 8h7" stroke="#444c59" strokeWidth="2" /></Ico>
      <div className="ml-[7px] flex h-[14px] w-[86px] items-center">
        <div className="h-px w-[34px] bg-[#f5f8fc] shadow-[0_-1px_0_#8b9ab2]" />
        <Ico w={9} h={12}><path d="M.5.500h8v7.500l-4 3.500-4-3.500z" fill="#eff3f9" stroke="#59677d" /></Ico>
        <div className="h-px grow bg-[#f5f8fc] shadow-[0_-1px_0_#8b9ab2]" />
      </div>
      <Ico w={16} h={16} className="ml-[6px]"><circle cx="8" cy="8" r="7" fill="#f0f4fa" stroke="#6d7b92" /><path d="M4.500 8h7M8 4.500v7" stroke="#444c59" strokeWidth="2" /></Ico>
      <Ico w={15} h={15} className="ml-[5px]"><path d="M.5.500h14v14H.5z" fill="#fff" stroke="#3c64a3" /><path d="M1 1.500h13" stroke="#3c64a3" strokeWidth="2" /><path d="M7.500 4l2 2h-4zM7.500 13.500l2-2h-4zM2 8.700l2.500-2v4zM13 8.700l-2.500-2v4z" fill="#23477f" /><path d="M7.500 5v7M4 8.700h7" stroke="#23477f" strokeWidth=".7" /></Ico>
      <Sep className="ml-[8px] h-[18px]" />
      <Ico w={17} h={14} className="ml-[6px]"><path d="M.5.500h8v12h-8z" fill="#f4efe7" stroke="#72685b" /><path d="M8.500.500h6v12h-6z" fill="#fff" stroke="#72685b" /><path d="M14.500 4h2v5h-2" fill="#ddd" stroke="#72685b" /></Ico>
      <Caret className="ml-[3px] mr-[3px]" />
    </div>
  );
}

const FolderIco = ({ s }: { s: number }) => (
  <svg width={s} height={s} viewBox="0 0 26 30" fill="none" preserveAspectRatio="none">
    <path d="M3 2l10-1v27l-8 1-2-2z" fill="#f1d985" stroke="#d7b659" />
    <path d="M13 6l8-2v22l-8 3z" fill="#f8e9a9" stroke="#d7b659" />
    <path d="M5 29L3 6l7 2v21z" fill="#fbeeb7" />
  </svg>
);

function TaskButton({ icon, label, active = false, w = "w-[79px]" }: { icon: React.ReactNode; label: string; active?: boolean; w?: string }) {
  return (
    <div className={`flex h-[39px] shrink-0 items-center rounded-[3px] border border-[#243448] shadow-[inset_0_0_0_1px_rgba(225,235,246,0.7)] ${w} ${active ? "bg-linear-to-br from-[#eef1f5] via-[#bdc6d3] to-[#a5b3c5]" : "bg-linear-to-br from-[#c4ccd8] via-[#96a4b8] to-[#8596ae]"}`}>
      <div className="flex h-[32px] w-[41px] items-center justify-center">{icon}</div>
      <span className="whitespace-nowrap text-white [text-shadow:0_0_2px_#34435a]">{label}</span>
    </div>
  );
}

function Taskbar() {
  return (
    <footer className="flex h-[40px] items-center border-t border-[#28374b] bg-[#8192aa] text-[12px] text-white">
      <svg width="38" height="38" viewBox="0 0 38 38" className="ml-[8px] shrink-0">
        <defs>
          <radialGradient id="orb" cx=".5" cy=".9" r=".9"><stop offset="0" stopColor="#4fd0f2" /><stop offset=".5" stopColor="#1d6298" /><stop offset="1" stopColor="#1a3253" /></radialGradient>
        </defs>
        <circle cx="19" cy="19" r="17.500" fill="url(#orb)" stroke="#1c3149" />
        <path d="M3 17a16 15 0 0132 0c-8-4-24-4-32 0z" fill="#fff" opacity=".45" />
        <path d="M11 10.500c3-2 5-1.500 7.500-.5L17 17.500c-3-1-5-1-8 .5z" fill="#f0662b" />
        <path d="M20 10.500c3 1 5.500 1 9-.5L27.500 17.500c-3 1.500-6 1.500-9 .5z" fill="#8fc641" />
        <path d="M8.500 20c3-1.500 5-1 8 0L15 27c-3-1-5-1-8 .5z" fill="#42a5e8" />
        <path d="M18 20.500c3 1 6 1 9-.5l-1.500 7.500c-3 1.500-6 1.500-9 .5z" fill="#fdc82f" />
      </svg>
      <svg width="33" height="33" viewBox="0 0 33 33" className="ml-[22px] shrink-0" fill="none">
        <rect width="33" height="33" rx="6" fill="#2e9df0" /><path d="M0 20L33 6v21q0 6-6 6H6q-6 0-6-6z" fill="#1f8be2" opacity=".5" />
        <circle cx="12.500" cy="13.500" r="4.500" stroke="#fff" strokeWidth="2.600" /><path d="M16.500 14.500l3 4M20 12h5v9q0 5-5 4M9 22c1 4 8 4 9.500 0" stroke="#fff" strokeWidth="2.600" /><circle cx="20" cy="7.500" r="2" fill="#fff" />
      </svg>
      <svg width="32" height="32" viewBox="0 0 32 32" className="ml-[22px] shrink-0">
        <path d="M15.500 16C11 11 11 2 14 1c8-2 14 2 13 6-2 3-8 5-11.500 9z" fill="#b73be8" />
        <path d="M15.500 16c3-5 9-7 11-9 5 2 6 10 3 14-3 2-10-2-14-5z" fill="#f4452d" />
        <path d="M15.500 16c5 1 11 5 14 5-1 7-8 11-14 9-2-3 1-10 0-14z" fill="#fbd21b" />
        <path d="M15.500 16c0 5-2 12 0 14-6 2-13-3-13-9 2-3 9-2 13-5z" fill="#37bd50" />
        <path d="M15.500 16c-4 2-11 3-13 5C-1 15 2 9 6 7c4 1 7 5 9.500 9z" fill="#34a5e8" />
        <path d="M15.500 16C13 12 8 9 6 7c1-4 5-6 8-6-1 5 1 11 1.500 15z" fill="#3b6bf0" />
        <circle cx="15.500" cy="15.500" r="2.800" fill="#fff" />
      </svg>
      <svg width="30" height="30" viewBox="0 0 30 30" className="ml-[22px] mr-[14px] shrink-0">
        <circle cx="15" cy="15" r="14.500" fill="#f7c92c" />
        <path d="M15 15L2.440 7.750A14.500 14.500 0 0127.560 7.750L28 8.500H15z" fill="#dd4b3e" />
        <path d="M15 21.500L13 29.360A14.500 14.500 0 012.440 7.750L9.400 18.200z" fill="#4aa853" />
        <circle cx="15" cy="15" r="7" fill="#fff" /><circle cx="15" cy="15" r="5.500" fill="#4a86e8" />
      </svg>
      <div className="flex gap-[3px]">
        <TaskButton icon={<FolderIco s={28} />} label="C:\..." />
        <TaskButton label="Jav..." icon={
          <svg width="32" height="32" viewBox="0 0 32 32"><rect width="32" height="32" fill="#332653" /><circle cx="16" cy="16" r="12.500" fill="none" stroke="#e8e5ee" strokeWidth="4" strokeDasharray="5 2.850" /><circle cx="16" cy="16" r="11.500" fill="#2b1a22" /><text x="16" y="15" textAnchor="middle" fontSize="8" fontWeight="700" fill="#f08a24" fontFamily="Liberation Sans" textLength="30" lengthAdjust="spacingAndGlyphs">Java EE</text><text x="16" y="24.500" textAnchor="middle" fontSize="10" fill="#f08a24" fontFamily="Liberation Sans">IDE</text></svg>} />
        <TaskButton label="夜..." icon={
          <svg width="30" height="33" viewBox="0 0 30 33"><path d="M15 .5L29 8.500v16L15 32.500 1 24.500v-16z" fill="#1c2127" /><text x="15" y="20.500" textAnchor="middle" fontSize="14" fill="#2fb3c4" fontFamily="Liberation Sans">nox</text></svg>} />
        <div className="flex w-[78px]">
          <TaskButton w="w-[74px]" label="An..." icon={
            <svg width="30" height="32" viewBox="0 0 30 32" fill="none"><circle cx="15" cy="14" r="13.500" fill="#83bd41" /><circle cx="15" cy="10.500" r="4" fill="#4b6630" /><path d="M13.500 13L5 30M16.500 13L25 30" stroke="#f4f7f1" strokeWidth="3.500" /><path d="M8 20c5 3 9 3 14 0" stroke="#f4f7f1" strokeWidth="2.500" /><circle cx="15" cy="11" r="2.500" fill="#66713b" /></svg>} />
          <div className="ml-[1px] h-[39px] w-[3px] rounded-r-[2px] border border-l-0 border-[#243448] bg-[#b3bfce]" />
        </div>
        <TaskButton w="w-[78px]" label="华..." icon={
          <svg width="30" height="30" viewBox="0 0 30 30"><circle cx="15" cy="15" r="14.500" fill="#096668" /><path d="M4 5l20 4-10 6z" fill="#3daef0" /><path d="M4 5l1 12 8-1z" fill="#27c1c9" /><path d="M8 18L27 12l-4 12-3-2-11 5 4-7z" fill="#9bea2a" /></svg>} />
        <TaskButton w="w-[78px]" active label="Min..." icon={
          <svg width="25" height="30" viewBox="0 0 25 30" fill="none"><rect width="25" height="24" rx="4" fill="#d93427" /><path d="M14 23h5l-5 6z" fill="#d93427" /><rect x="4" y="4" width="17" height="16" rx="2" stroke="#fff" strokeWidth="2" /><path d="M8.500 17V8l4 5 4-5v9" stroke="#fff" strokeWidth="2.800" /></svg>} />
        <TaskButton w="w-[78px]" label="Mic..." icon={
          <svg width="30" height="30" viewBox="0 0 30 30" fill="none"><path d="M6 1h23v28H1V6z" fill="#edf6ec" stroke="#3f8e46" strokeWidth="1.600" /><path d="M18 3h10v12H18z" fill="#a9d2a5" /><path d="M5 5h5l3 6 4-6h5l-7 9 6 9h-5l-4-6-4 6H3l7-9z" fill="#277a31" /><path d="M12 19l18-3-2 11H12z" fill="#fff" /><path d="M14 21l13-2M14 24l13-2M14 27l13-2" stroke="#67b05d" /></svg>} />
        <TaskButton w="w-[78px]" label="Rec..." icon={
          <svg width="28" height="31" viewBox="0 0 28 31"><path d="M5 6h9l2 4v9l-3 11H6l1-13z" fill="#201d1d" /><circle cx="6" cy="6" r="5" fill="#43413f" /><circle cx="13" cy="4" r="3" fill="#43413f" /><circle cx="5.500" cy="6" r="2.500" fill="#c9c9c9" /><rect x="14" y="9" width="12" height="11" fill="#d4161b" stroke="#3d1112" strokeWidth="1.500" /></svg>} />
      </div>
      <span className="ml-[14px] mt-[1px] text-[13px] text-[#e6ecf4]">api</span>
      <div className="mb-[8px] ml-[5px]"><FolderIco s={16} /></div>
      <span className="mb-[9px] ml-[4px]">手册</span>
      <span className="mb-[22px] ml-[62px] w-[9px] text-[15px] leading-none">»</span>
      <Ico w={15} h={12} className="ml-[11px]"><rect x=".5" y="3.500" width="14" height="7" rx="1" fill="#a9a9a9" stroke="#e0e0e0" /><path d="M2 5.500h11M2 7.200h11M4 9h7" stroke="#555" strokeDasharray="1 1" /><path d="M5 3V1h6" stroke="#777" /></Ico>
      <Ico w={20} h={17} className="ml-[16px]"><path d="M1 6.500c5-6 13-6 18 0M4 10c4-4 8-4 12 0M7 13c2-2 4-2 6 0" stroke="#fff" strokeWidth="1.800" /><circle cx="10" cy="15" r="1.800" fill="#fff" /></Ico>
      <Ico w={9} h={5} className="ml-[11px]"><path d="M0 5h9L4.500 0z" fill="#fff" /></Ico>
      <Ico w={16} h={15} className="ml-[12px]"><circle cx="11" cy="4" r="3.500" fill="#58b8ea" /><circle cx="12" cy="11" r="4" fill="#3c9fdf" /><circle cx="6" cy="6.500" r="5" fill="#f8bf27" /><path d="M4 13c2-4 6-2 10-4" stroke="#d5f0ff" strokeWidth="2" /></Ico>
      <Ico w={16} h={16} className="ml-[8px]"><path d="M5 .7h6L15.300 5v6L11 15.300H5L.7 11V5z" fill="#c90a15" stroke="#222" strokeWidth="1.200" /></Ico>
      <Ico w={15} h={16} className="ml-[9px]"><path d="M1 2.500h7v12.500H1z" stroke="#fff" strokeWidth="1.600" /><path d="M3 1h3M9 3v3M13 3v3" stroke="#fff" strokeWidth="1.500" /><path d="M7 6h8v3q-1 3-4 3t-4-3z" fill="#fff" stroke="#333" strokeWidth=".5" /><path d="M11 12v3" stroke="#fff" /></Ico>
      <Ico w={14} h={15} className="ml-[10px]"><path d="M1 5h3l4-4v13l-4-4H1z" fill="#fff" stroke="#333" strokeWidth=".6" /><path d="M10 5q2 2.500 0 5M12 3q3 4.500 0 9" stroke="#fff" /></Ico>
      <Ico w={16} h={15} className="ml-[9px]"><path d="M1 1v4h4V1M3 5v8h4" stroke="#fff" strokeWidth="1.300" /><rect x="6" y="3.500" width="9.500" height="7.500" fill="#3d4858" stroke="#fff" strokeWidth="1.400" /><path d="M8 13.500h6" stroke="#fff" strokeWidth="1.800" /></Ico>
      <div className="ml-auto flex w-[101px] flex-col items-center leading-[18px]">
        <span>上午 11:45</span>
        <span className="whitespace-nowrap tracking-[0.150px]">2016/12/5 星期一</span>
      </div>
      <div className="ml-[8px] h-[39px] w-[14px] shrink-0 border border-[#42526a] bg-linear-to-br from-[#4f5f77] to-[#a5b2c4] shadow-[inset_0_0_0_1px_#99a8bd]" />
    </footer>
  );
}

export default function App() {
  return (
    <div className="flex h-[768px] w-[1366px] flex-col overflow-hidden bg-linear-to-b from-[#c2d3eb] to-[#b6c9e4] font-['Noto_Sans','Noto_Sans_CJK_SC',sans-serif]">
      <div className="h-[47px] bg-linear-to-b from-[#c4d5ed] to-[#b9cae3]">
        <TitleBar />
        <Tabs />
      </div>
      <Ribbon />
      <main className="flex h-[544px] border-t-[3px] border-[#a9bcd8] bg-[#dce9f8] pt-[3px]">
        <div className="w-[4px] border-l border-[#5d7da8]" />
        <MapPane />
        <div className="w-[5px] border-l-2 border-[#f4f8fd] bg-[#b9cde8]" />
        <div className="pt-[1px]"><NotesPane /></div>
      </main>
      <DocTabs />
      <StatusBar />
      <Taskbar />
    </div>
  );
}
